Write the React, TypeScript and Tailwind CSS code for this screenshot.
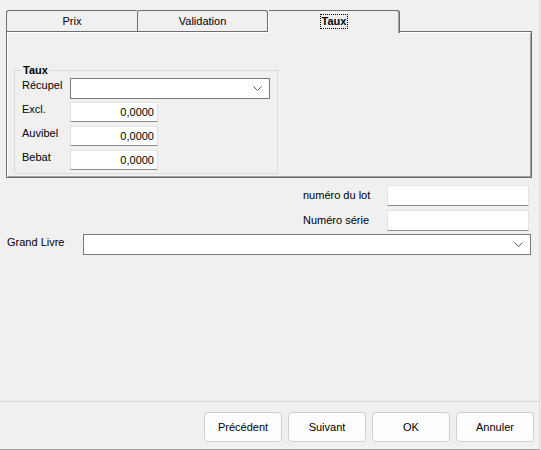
import type { ReactNode } from "react";

function Chevron() {
  return (
    <svg width="9" height="5" viewBox="0 0 9 5" className="block">
      <polyline points="0.5,0.5 4.5,4.5 8.5,0.5" fill="none" stroke="#5c5c5c" strokeWidth="1" />
    </svg>
  );
}

function Select({ className = "" }: { className?: string }) {
  return (
    <div className={`h-[21px] bg-white border border-[#7a7a7a] flex items-center justify-end pr-[7px] ${className}`}>
      <Chevron />
    </div>
  );
}

function Field({ value = "", className = "" }: { value?: string; className?: string }) {
  return (
    <div
      className={`bg-white border border-[#e3e3e3] border-b-[#8c8c8c] flex items-center justify-end pr-[3px] leading-[14px] ${className}`}
    >
      {value}
    </div>
  );
}

function GroupRow({ label, children }: { label: string; children: ReactNode }) {
  return (
    <div className="flex items-start">
      <span className="w-[48px] leading-[14px]">{label}</span>
      {children}
    </div>
  );
}

function Button({ children }: { children: ReactNode }) {
  return (
    <button className="w-[78px] h-[30px] bg-[#fdfdfd] border border-[#d0d0d0] rounded-[4px] text-[11px] text-black">
      {children}
    </button>
  );
}

export default function App() {
  return (
    <div className="w-[541px] h-[450px] bg-[#f0f0f0]">
      <div
        className="w-[540px] h-[450px] border-r border-[#dadada] border-b border-b-[#a0a0a0] flex flex-col text-[11px] text-black"
        style={{ fontFamily: '"Liberation Sans", Arial, sans-serif' }}
      >
        {/* Tabs */}
        <div className="pt-[10px] pl-[6px] flex items-end h-[31px]">
          <div className="w-[131px] h-[21px] border-t border-l border-[#6e6e6e] rounded-tl-[3px] flex items-center justify-center">
            Prix
          </div>
          <div className="w-[131px] h-[21px] border-t border-l border-r border-[#6e6e6e] rounded-t-[3px] flex items-center justify-center">
            Validation
          </div>
          <div className="relative z-10 -mb-[2px] w-[132px] h-[23px] bg-[#f0f0f0] border-t border-t-[#6e6e6e] border-l border-l-white border-r border-r-[#6e6e6e] rounded-tr-[3px] shadow-[inset_-1px_0_0_#a0a0a0] flex items-start justify-center pt-[4px]">
            <span className="font-bold leading-[13px] outline outline-1 outline-dotted outline-black px-px">Taux</span>
          </div>
        </div>

        {/* Panel */}
        <div className="ml-[6px] w-[526px] h-[147px] border-t border-l border-[#6e6e6e] border-r border-b border-r-[#696969] border-b-[#696969] shadow-[inset_1px_1px_0_#ffffff,inset_-1px_-1px_0_#a0a0a0]">
          <fieldset className="mt-[31px] ml-[7px] w-[264px] border border-[#dcdcdc] pt-px pl-[7px] pr-[7px] pb-[3px]">
            <legend className="font-bold leading-[14px] px-px">Taux</legend>
            <div className="flex flex-col gap-[3px]">
              <GroupRow label="Récupel">
                <Select className="w-[200px]" />
              </GroupRow>
              <div className="flex flex-col gap-[4px]">
                <GroupRow label="Excl.">
                  <Field value="0,0000" className="w-[88px] h-[20px]" />
                </GroupRow>
                <GroupRow label="Auvibel">
                  <Field value="0,0000" className="w-[88px] h-[20px]" />
                </GroupRow>
                <GroupRow label="Bebat">
                  <Field value="0,0000" className="w-[88px] h-[20px]" />
                </GroupRow>
              </div>
            </div>
          </fieldset>
        </div>

        {/* Lot / série */}
        <div className="mt-[7px] pl-[303px] flex flex-col gap-[4px]">
          <div className="flex items-center">
            <span className="w-[84px]">numéro du lot</span>
            <Field className="w-[142px] h-[21px]" />
          </div>
          <div className="flex items-center">
            <span className="w-[84px]">Numéro série</span>
            <Field className="w-[142px] h-[21px]" />
          </div>
        </div>

        {/* Grand Livre */}
        <div className="mt-[3px] pl-[7px] flex items-start">
          <span className="w-[76px] pt-px leading-[14px]">Grand Livre</span>
          <Select className="w-[448px]" />
        </div>

        {/* Footer */}
        <div className="mt-auto h-[48px] border-t border-[#d8d8d8] flex justify-end gap-[6px] pt-[10px] pr-[5px]">
          <Button>Précédent</Button>
          <Button>Suivant</Button>
          <Button>OK</Button>
          <Button>Annuler</Button>
        </div>
      </div>
    </div>
  );
}
